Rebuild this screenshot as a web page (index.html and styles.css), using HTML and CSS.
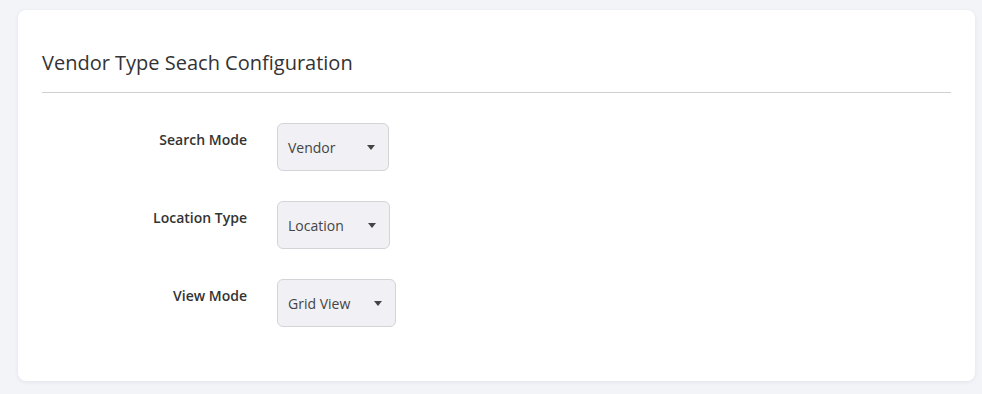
FILE: index.html
```html
<!DOCTYPE html>
<html lang="en">

<head>
    <meta charset="UTF-8">
    <meta name="viewport" content="width=device-width, initial-scale=1.0">
    <title>Vendor Type Search Configuration</title>
    <link rel="stylesheet" href="styles.css">
</head>

<body>
    <div class="card">
        <h3 class="card-title">Vendor Type Seach Configuration</h3>
        <div class="form">
            <div class="form-row">
                <label class="form-label">Search Mode</label>
                <div class="select">
                    <span>Vendor</span>
                    <span class="caret"></span>
                </div>
            </div>
            <div class="form-row">
                <label class="form-label">Location Type</label>
                <div class="select">
                    <span>Location</span>
                    <span class="caret"></span>
                </div>
            </div>
            <div class="form-row">
                <label class="form-label">View Mode</label>
                <div class="select">
                    <span>Grid View</span>
                    <span class="caret"></span>
                </div>
            </div>
        </div>
    </div>
</body>

</html>
```

FILE: styles.css
```css
body {
    margin: 0;
    padding: 10px 7px 13px 18px;
    background-color: #f2f4f8;
    font-family: "Open Sans", Arial, sans-serif;
    color: #333;
}

.card {
    background-color: #fff;
    border-radius: 8px;
    padding: 16px 24px 54px 24px;
    box-shadow: 0 1px 4px rgba(30, 40, 80, 0.08);
}

.card-title {
    margin: 25px 0 0 0;
    padding-bottom: 17px;
    font-size: 20px;
    font-weight: 400;
    line-height: 24px;
    color: #333;
    border-bottom: 1px solid #cfcfcf;
}

.form {
    display: flex;
    flex-direction: column;
    gap: 30px;
    padding-top: 30px;
}

.form-row {
    display: flex;
    align-items: flex-start;
    gap: 30px;
}

.form-label {
    width: 205px;
    text-align: right;
    font-size: 14px;
    font-weight: 600;
    line-height: 20px;
    padding-top: 7px;
    color: #333;
}

.select {
    display: flex;
    align-items: center;
    justify-content: space-between;
    gap: 24px;
    min-width: 87px;
    height: 46px;
    padding: 0 13px 0 10px;
    background-color: #f0f0f5;
    border: 1px solid #d3d3d8;
    border-radius: 6px;
    font-size: 14px;
    color: #444;
}

.caret {
    width: 0;
    height: 0;
    border-left: 4px solid transparent;
    border-right: 4px solid transparent;
    border-top: 5px solid #444;
}
```
